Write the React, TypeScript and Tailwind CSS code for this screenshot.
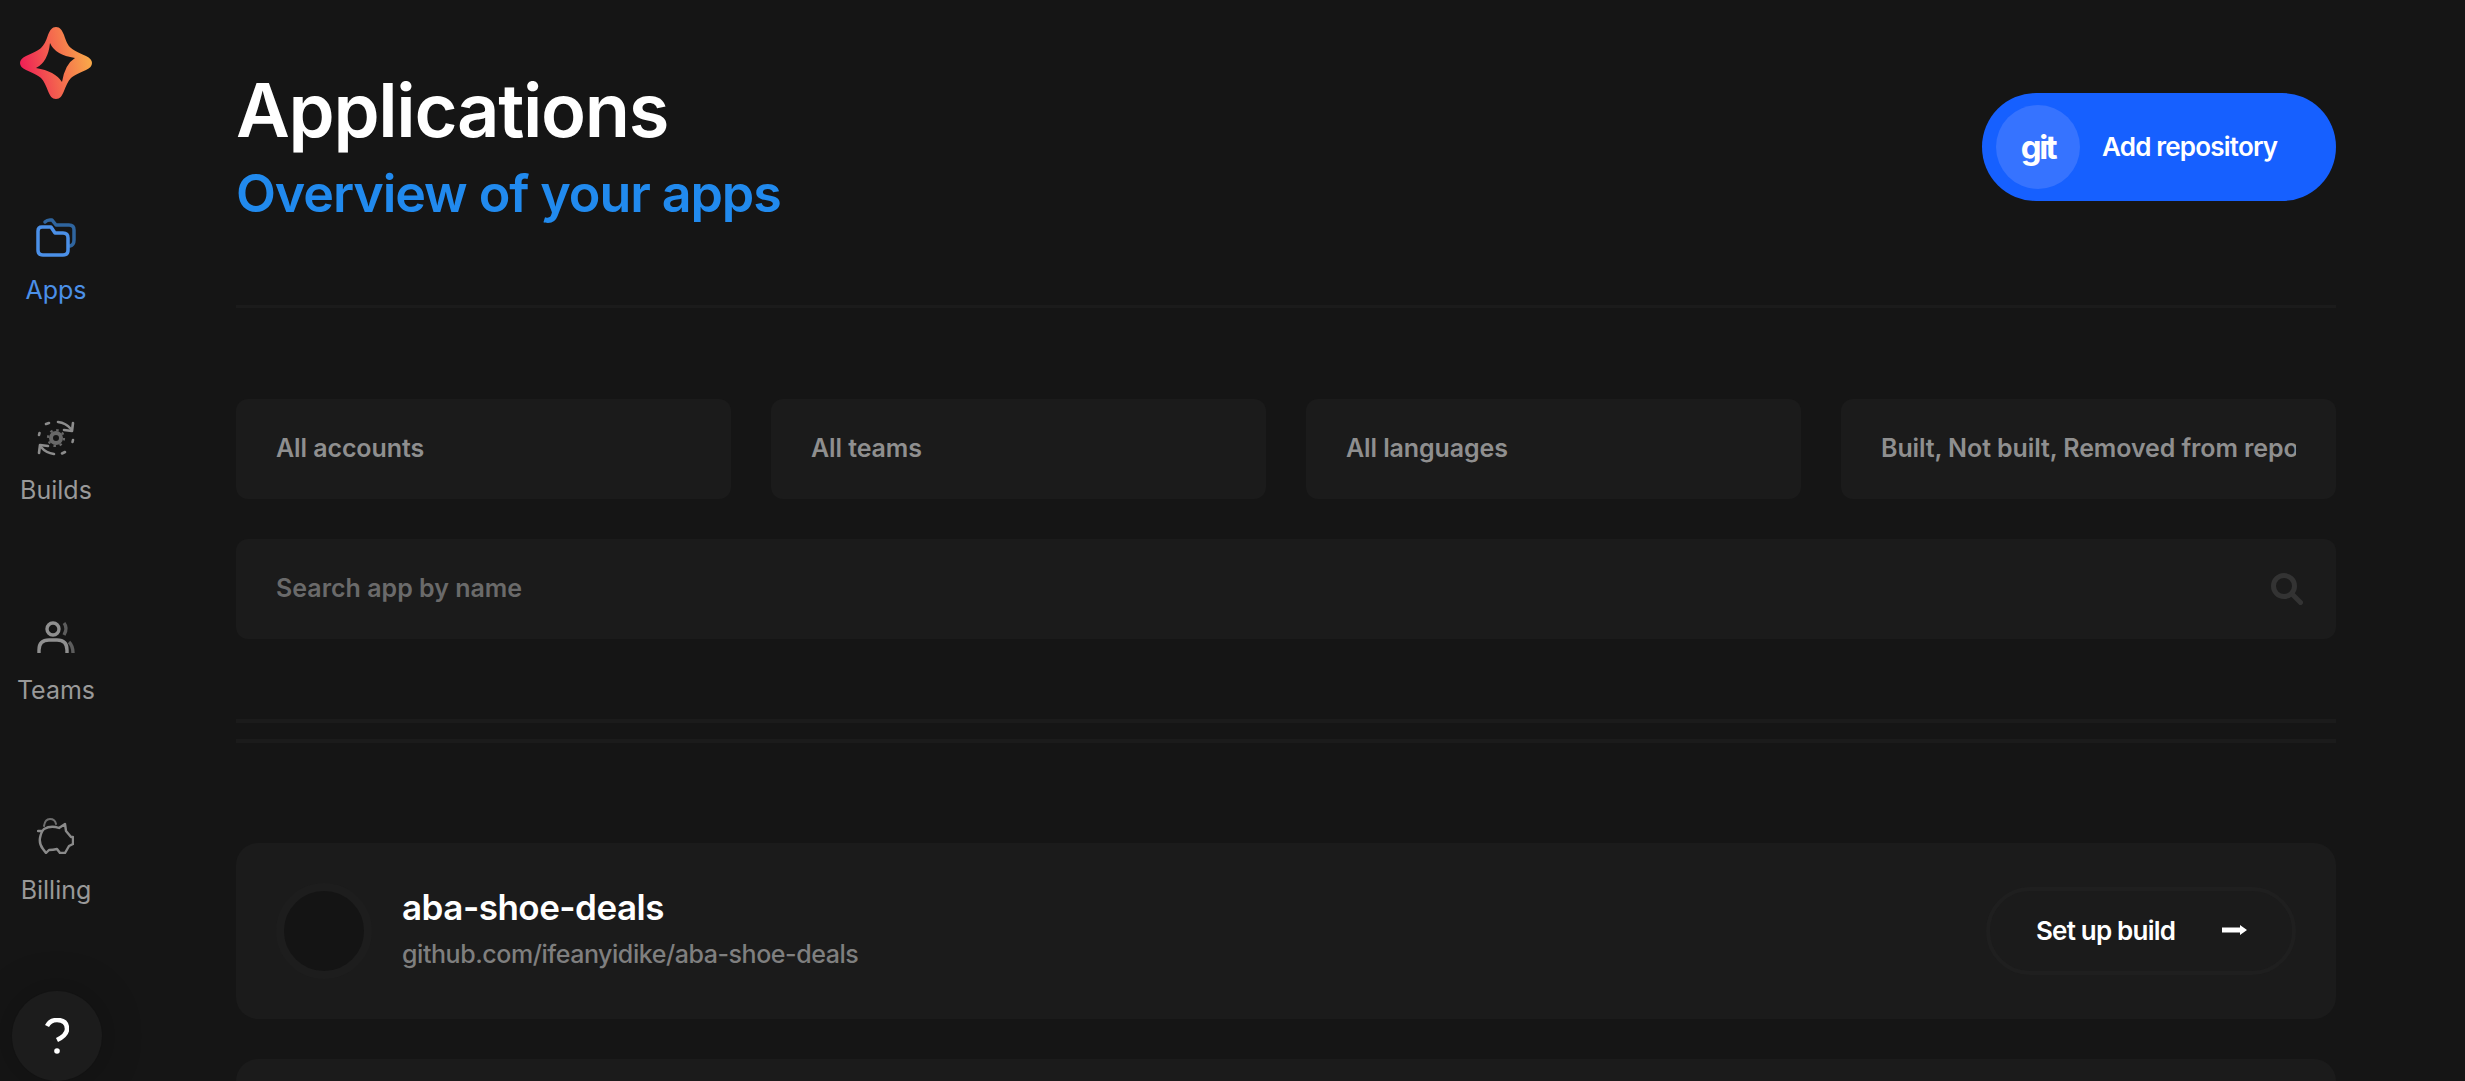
const filters = ["All accounts", "All teams", "All languages", "Built, Not built, Removed from repo"];

function Logo() {
  return (
    <svg className="shrink-0" width="72" height="72" viewBox="0 0 72 72">
      <defs>
        <linearGradient id="logo" x1="0" y1="0.6" x2="1" y2="0.4">
          <stop offset="0" stopColor="#ee1c56" />
          <stop offset="0.5" stopColor="#f4684e" />
          <stop offset="1" stopColor="#f9ad49" />
        </linearGradient>
      </defs>
      <path
        fill="url(#logo)"
        fillRule="evenodd"
        d="M36 0C40 0 42 3 44 8C46 14 48 19 51 21C54 24 60 26 66 29C70 31 72 33 72 36C72 39 70 41 66 43C60 46 54 48 51 51C48 54 46 59 44 64C42 69 40 72 36 72C32 72 30 69 28 64C26 59 24 54 21 51C18 48 12 46 6 43C2 41 0 39 0 36C0 33 2 31 6 29C12 26 18 24 21 21C24 18 26 14 28 8C30 3 32 0 36 0ZM30 16Q35 28 55 31Q45 37 42 55Q35 44 16 41Q28 35 30 16Z"
      />
    </svg>
  );
}

function AppsIcon() {
  return (
    <svg width="40" height="39" viewBox="0 0 40 39" fill="none" strokeLinecap="round" strokeLinejoin="round">
      <path stroke="#2f659f" strokeWidth="3.5" d="M9 4Q11 2 14 2H16L20 7H33Q38 7 38 12V22Q38 27 34 28" />
      <path stroke="#4b90e8" strokeWidth="3.5" d="M2 13V32Q2 37 7 37H27Q32 37 32 32V20Q32 15 27 15H19L15 9H6Q2 9 2 13Z" />
    </svg>
  );
}

function BuildsIcon() {
  return (
    <svg className="mb-[1px]" width="38" height="36" viewBox="0 0 38 36" fill="none" strokeLinecap="round" strokeLinejoin="round">
      <circle cx="19" cy="18" r="5" stroke="#686868" strokeWidth="4" />
      <circle cx="19" cy="18" r="8" stroke="#686868" strokeWidth="2.2" strokeDasharray="2.5 3.78" strokeLinecap="butt" />
      <path stroke="#8c8c8c" strokeWidth="2.6" d="M21 2Q29 3 34 9" />
      <path stroke="#8c8c8c" strokeWidth="2.6" d="M36 3L35 11L27 10" />
      <path stroke="#8c8c8c" strokeWidth="2.6" d="M17 34Q9 33 4 27" />
      <path stroke="#8c8c8c" strokeWidth="2.6" d="M2 33L3 25L11 26" />
      <path stroke="#8c8c8c" strokeWidth="2.6" d="M2 15L2.5 13M9 4L12 3M36 20L35.5 22M28 32L25 33.5" />
    </svg>
  );
}

function TeamsIcon() {
  return (
    <svg className="mb-[4px]" width="38" height="32" viewBox="0 0 38 32" fill="none">
      <circle cx="16" cy="8" r="6" stroke="#8f8f8f" strokeWidth="3.4" />
      <path stroke="#8f8f8f" strokeWidth="3.4" d="M2 32V29Q2 19 12 19H20Q30 19 30 29V32" />
      <path stroke="#5c5c5c" strokeWidth="3.4" d="M27 2Q31 7 27 14" />
      <path stroke="#5c5c5c" strokeWidth="3.4" d="M32 21Q36 25 36 32" />
    </svg>
  );
}

function BillingIcon() {
  return (
    <svg className="mb-[3px]" width="37" height="36" viewBox="0 0 37 36" fill="none" strokeLinecap="round" strokeLinejoin="round">
      <path stroke="#6e6e6e" strokeWidth="2" d="M7 8Q8 1 13 1Q18 1 19 6" />
      <path
        stroke="#8a8a8a"
        strokeWidth="2.4"
        d="M7 11Q14 7 22 10L28 6L29 13L34 19H36V26L32 28L28 35H23L20 31Q16 32 12 32L9 35L6 31Q2 26 3 20Q4 14 7 11ZM1 13L5 13"
      />
    </svg>
  );
}

function NavItem({ label, icon, active }: { label: string; icon: React.ReactNode; active?: boolean }) {
  return (
    <a className={`flex flex-col items-center text-[25px] leading-[30px] ${active ? "text-[#4b90e8]" : "text-[#999999]"}`}>
      <div className="flex h-[38px] items-end">{icon}</div>
      <span className="mt-[18px]">{label}</span>
    </a>
  );
}

export default function App() {
  return (
    <div className="flex h-[1081px] w-full overflow-hidden bg-[#151515] [font-family:Inter,sans-serif]">
      {/* Sidebar */}
      <aside className="flex h-full w-[112px] shrink-0 flex-col items-center pt-[27px]">
        <Logo />
        <nav className="mt-[120px] flex flex-col items-center gap-[114px]">
          <NavItem active label="Apps" icon={<AppsIcon />} />
          <NavItem label="Builds" icon={<BuildsIcon />} />
          <NavItem label="Teams" icon={<TeamsIcon />} />
          <NavItem label="Billing" icon={<BillingIcon />} />
        </nav>
        <button className="ml-[2px] mt-auto flex h-[90px] w-[90px] shrink-0 items-center justify-center rounded-full bg-[#1c1c1c] shadow-[0_0_40px_rgba(0,0,0,0.25)]">
          <svg width="24" height="36" viewBox="0 0 24 36" fill="none">
            <path stroke="#fff" strokeWidth="4.5" d="M2 8Q5 2 12 2Q22 2 22 11Q22 17 12 22" />
            <circle cx="12" cy="33" r="2.8" fill="#fff" />
          </svg>
        </button>
      </aside>

      {/* Main */}
      <main className="min-w-0 flex-1 pl-[124px] pr-[129px]">
        <header className="flex h-[308px] items-start justify-between border-b-[3px] border-[#1b1b1b] pt-[70px]">
          <div>
            <h1 className="text-[74px] font-semibold leading-[80px] tracking-[-1.3px] text-white">Applications</h1>
            <p className="mt-[14px] text-[52px] font-semibold leading-[60px] tracking-[-1.1px] text-[#218aee]">Overview of your apps</p>
          </div>
          <button className="mt-[23px] flex h-[108px] w-[354px] items-center rounded-full bg-[#1660ff] pl-[14px] text-white">
            <span className="flex h-[84px] w-[84px] items-center justify-center rounded-full bg-[#3673ff] text-[33px] font-bold leading-none tracking-[-2.5px]">git</span>
            <span className="ml-[22px] text-[26px] font-semibold leading-none tracking-[-0.8px]">Add repository</span>
          </button>
        </header>

        {/* Filters */}
        <div className="mt-[91px] grid grid-cols-4 gap-[40px]">
          {filters.map((f) => (
            <div key={f} className="flex h-[100px] items-center rounded-[12px] bg-[#1b1b1b] px-[40px] text-[25px] font-semibold tracking-[-0.1px] text-[#8f8f8f]">
              <span className="block overflow-hidden whitespace-nowrap">{f}</span>
            </div>
          ))}
        </div>
        <div className="mt-[40px] flex h-[100px] items-center justify-between rounded-[12px] bg-[#1b1b1b] pl-[40px] pr-[33px]">
          <span className="text-[25px] font-semibold text-[#6a6a6a]">Search app by name</span>
          <svg width="32" height="32" viewBox="0 0 32 32" fill="none" stroke="#333333" strokeWidth="5" strokeLinecap="round">
            <circle cx="13" cy="13" r="10.5" />
            <path d="M22 22L29.5 29.5" />
          </svg>
        </div>

        <div className="mt-[80px] h-[4px] bg-[#1b1b1b]" />
        <div className="mt-[16px] h-[4px] bg-[#1b1b1b]" />

        {/* Rows */}
        <div className="mt-[100px] flex flex-col gap-[40px]">
          <div className="flex h-[176px] items-center justify-between rounded-[22px] bg-[#1b1b1b] pl-[40px] pr-[40px]">
            <div className="flex items-center">
              <div className="h-[96px] w-[96px] rounded-full border-[8px] border-[#1d1d1d] bg-[#141414]" />
              <div className="ml-[30px] pb-[5px]">
                <div className="text-[35px] font-semibold leading-[44px] tracking-[-0.5px] text-white">aba-shoe-deals</div>
                <div className="mt-[7px] text-[25px] font-medium leading-[36px] tracking-[-0.45px] text-[#7f7f7f]">github.com/ifeanyidike/aba-shoe-deals</div>
              </div>
            </div>
            <button className="flex h-[88px] w-[310px] items-center justify-between rounded-full border-[4px] border-[#1f1f1f] pb-[2px] pl-[46px] pr-[45px] text-[26px] font-semibold tracking-[-0.8px] text-white">
              Set up build
              <svg width="25" height="12" viewBox="0 0 25 12" fill="#fff">
                <path d="M0 3.5H18V1L25 6L18 11V8.5H0Z" />
              </svg>
            </button>
          </div>
          <div className="h-[176px] shrink-0 rounded-[22px] bg-[#1b1b1b]" />
        </div>
      </main>
    </div>
  );
}
